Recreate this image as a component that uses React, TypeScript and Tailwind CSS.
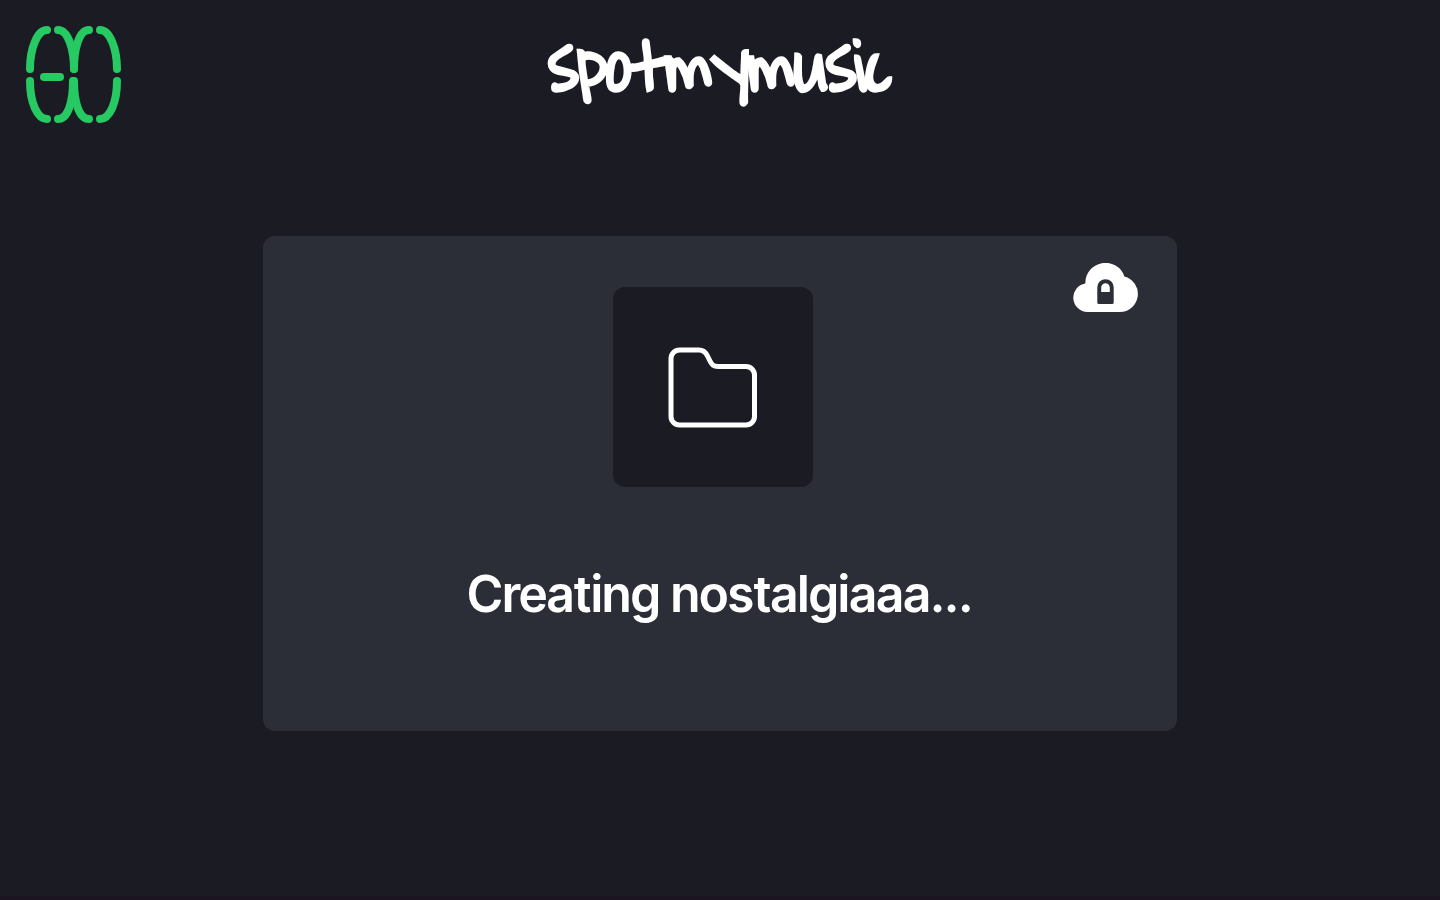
const logoSegments = [
  "M21 4C11 4 4 23 4 43",
  "M32 4C42 4 48 23 48 43",
  "M63 4C53 4 48 23 48 43",
  "M74 4C84 4 91 23 91 43",
  "M4 55C4 76 11 93 21 93",
  "M47 55C47 76 42 93 32 93",
  "M48 55C48 76 53 93 63 93",
  "M91 55C91 76 84 93 74 93",
  "M18 51H34",
];

function Logo() {
  return (
    <svg
      width="95"
      height="97"
      viewBox="0 0 95 97"
      fill="none"
      stroke="#27c962"
      strokeWidth="8"
      strokeLinecap="round"
      aria-hidden="true"
    >
      {logoSegments.map((d) => (
        <path key={d} d={d} />
      ))}
    </svg>
  );
}

function CloudLockIcon() {
  return (
    <svg width="65" height="49" viewBox="0 0 65 49" fill="#fff" aria-hidden="true">
      <path
        fillRule="evenodd"
        d="M14.5 49A14.4 14.4 0 0 1 12.3 20.4A20.1 20.1 0 0 1 51.4 13.4A18.1 18.1 0 0 1 46.9 49ZM24.3 24.4V39.4a1.6 1.6 0 0 0 1.6 1.6H39.1a1.6 1.6 0 0 0 1.6-1.6V24.4a8.2 8.2 0 0 0-16.4 0ZM28.2 29V24.6a4.3 4.3 0 0 1 8.6 0V29Z"
      />
    </svg>
  );
}

function FolderIcon() {
  return (
    <svg
      width="90"
      height="82"
      viewBox="0 0 90 82"
      fill="none"
      stroke="#fff"
      strokeWidth="5"
      strokeLinejoin="round"
      aria-hidden="true"
    >
      <path d="M11.5 4H31C35.5 4 37.5 6 39.5 10L42 15C44 19 45.5 20.5 50 20.5H78A8.5 8.5 0 0 1 86.5 29V70.5A8.5 8.5 0 0 1 78 79H11.5A8.5 8.5 0 0 1 3 70.5V12.5A8.5 8.5 0 0 1 11.5 4Z" />
    </svg>
  );
}

export default function App() {
  return (
    <div className="flex min-h-screen flex-col border-b-4 border-[#1c1420] bg-[#1b1b23] font-['Inter',sans-serif] text-white">
      <header className="grid grid-cols-[1fr_auto_1fr] items-start px-[26px] pt-[26px]">
        <a href="/" aria-label="Home" className="justify-self-start">
          <Logo />
        </a>
        <h1 className="text-[74px] leading-[86px] font-bold font-['Waiting_for_the_Sunrise','Gochi_Hand',cursive] [-webkit-text-stroke:3px_#fff]">
          spotmymusic
        </h1>
      </header>

      <main className="mx-auto mt-[113px] flex w-full max-w-[914px] flex-col rounded-[12px] bg-[#2c2e37] pb-[101px]">
        <div className="grid grid-cols-[1fr_200px_1fr] pt-[27px] pr-[39px] pl-[25px]">
          <div className="col-start-2 mt-6 flex size-[200px] items-center justify-center rounded-[12px] bg-[#1b1b23]">
            <FolderIcon />
          </div>
          <div className="justify-self-end">
            <CloudLockIcon />
          </div>
        </div>
        <p
          role="status"
          className="mt-[71px] text-center text-[50px] leading-[72px] font-semibold font-['Inter_Tight','Inter',sans-serif]"
        >
          Creating nostalgiaaa...
        </p>
      </main>
    </div>
  );
}
